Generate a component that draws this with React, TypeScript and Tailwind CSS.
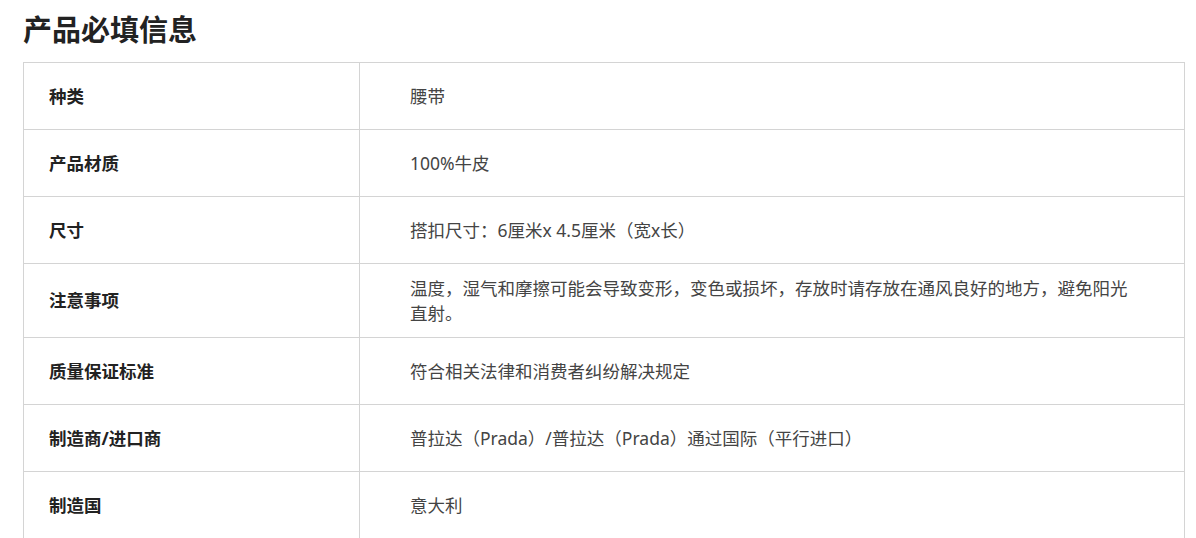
const ROWS: { label: string; value: string }[] = [
  { label: "种类", value: "腰带" },
  { label: "产品材质", value: "100%牛皮" },
  { label: "尺寸", value: "搭扣尺寸：6厘米x 4.5厘米（宽x长）" },
  {
    label: "注意事项",
    value:
      "温度，湿气和摩擦可能会导致变形，变色或损坏，存放时请存放在通风良好的地方，避免阳光直射。",
  },
  { label: "质量保证标准", value: "符合相关法律和消费者纠纷解决规定" },
  { label: "制造商/进口商", value: "普拉达（Prada）/普拉达（Prada）通过国际（平行进口）" },
  { label: "制造国", value: "意大利" },
];

export default function App() {
  return (
    <div
      className="min-h-[538px] bg-white pl-[23px] pr-[11px] text-[#333]"
      style={{ fontFamily: '"Noto Sans", "Noto Sans CJK SC", sans-serif' }}
    >
      <h2 className="pt-[10px] pb-[12px] text-[29px] leading-[40px] font-bold text-[#222]">
        产品必填信息
      </h2>

      <div className="border-t border-l border-r border-[#d4d4d4]">
        {ROWS.map((row) => (
          <div key={row.label} className="flex border-b border-[#d4d4d4]">
            <div className="flex w-[336px] shrink-0 items-center border-r border-[#d4d4d4] pl-[25px] min-h-[66px] text-[17.5px] font-bold text-[#222]">
              {row.label}
            </div>
            <div className="flex flex-1 items-center py-[11.5px] pl-[50px] pr-[50px] min-h-[66px] text-[17.5px] leading-[25px] text-[#444]">
              {row.value}
            </div>
          </div>
        ))}
      </div>
    </div>
  );
}
